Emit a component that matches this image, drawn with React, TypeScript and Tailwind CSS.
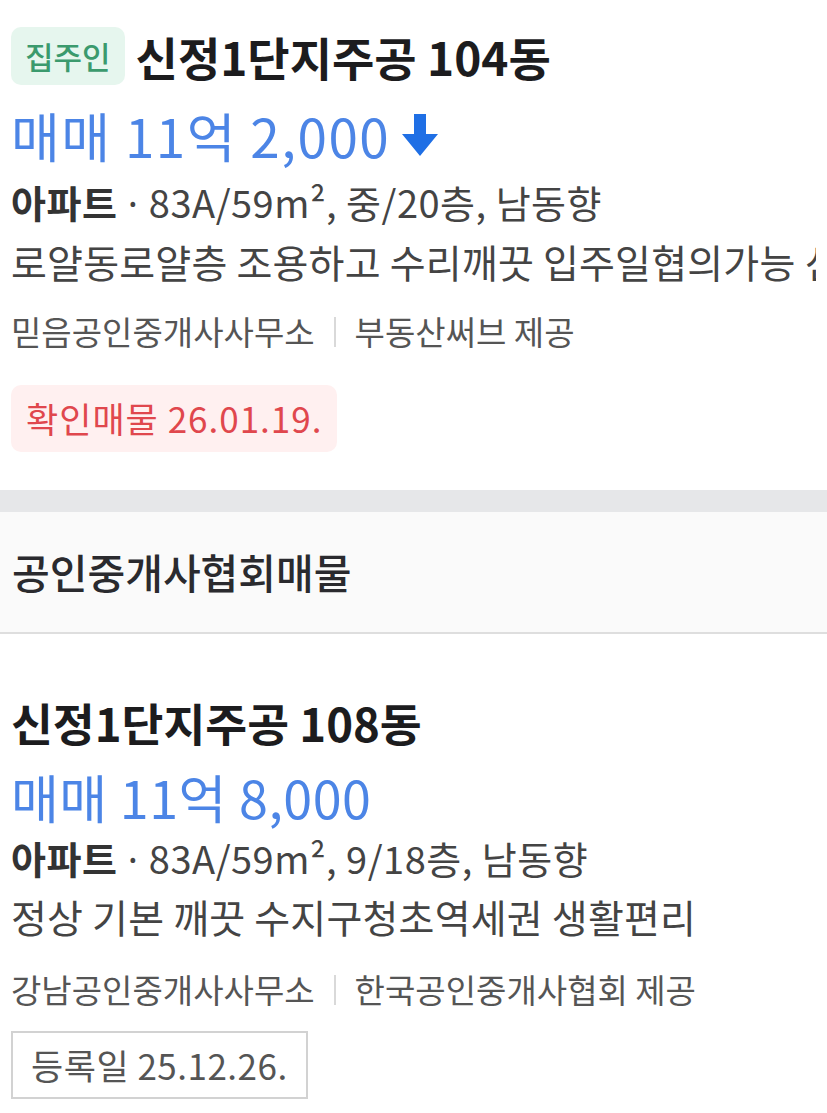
import React from "react";

const FONT = { fontFamily: '"Noto Sans CJK KR", "Noto Sans", sans-serif' };

function DownArrow() {
  return (
    <svg width="40" height="46" viewBox="0 0 40 46" className="ml-[10px] shrink-0">
      <path d="M14 2 H26 V22 H38 L20 44 L2 22 H14 Z" fill="#1f6fe5" />
    </svg>
  );
}

function Sep() {
  return <span className="mx-[19px] inline-block h-[30px] w-[2px] bg-[#d9d9d9]" />;
}

function Dot() {
  return <span className="font-['Noto_Sans',sans-serif]"> · </span>;
}

export default function App() {
  return (
    <div className="w-[827px] bg-white overflow-hidden" style={FONT}>
      {/* Card 1 */}
      <div className="px-[11px] pt-[27px] pb-[38px]">
        <div className="flex h-[58px] items-center">
          <span className="flex h-[58px] items-center rounded-[10px] bg-[#e6f6ee] px-[14px] text-[31px] font-medium text-[#3b9a6d]">
            집주인
          </span>
          <span className="ml-[11px] text-[46px] font-semibold leading-[58px] text-[#1c1c1e] whitespace-nowrap">
            신정1단지주공 104동
          </span>
        </div>
        <div className="mt-[20px] flex h-[60px] items-center">
          <span className="text-[53px] tracking-[1.5px] leading-[60px] text-[#4c85e6] whitespace-nowrap">매매 11억 2,000</span>
          <DownArrow />
        </div>
        <div className="mt-[12px] h-[50px] text-[38px] tracking-[0.5px] leading-[50px] text-[#444] whitespace-nowrap">
          <span className="font-bold text-[#333]">아파트</span>
          <Dot />
          83A/59m², 중/20층, 남동향
        </div>
        <div className="mt-[9px] h-[50px] overflow-hidden text-[39px] tracking-[0.2px] leading-[50px] text-[#444] whitespace-nowrap">
          로얄동로얄층 조용하고 수리깨끗 입주일협의가능 신
        </div>
        <div className="mt-[24px] flex h-[44px] items-center text-[33px] text-[#555] whitespace-nowrap">
          <span>믿음공인중개사사무소</span>
          <Sep />
          <span>부동산써브 제공</span>
        </div>
        <div className="mt-[31px] flex">
          <span className="flex h-[67px] items-center rounded-[10px] bg-[#fff0f0] px-[15px] text-[35px] tracking-[1px] text-[#e0474d] whitespace-nowrap">
            확인매물 26.01.19.
          </span>
        </div>
      </div>

      {/* Divider band */}
      <div className="h-[22px] bg-[#e6e7e9]" />

      {/* Section header */}
      <div className="flex h-[122px] items-center border-b-2 border-[#dedede] bg-[#fafafa] px-[12px]">
        <span className="text-[41px] font-medium text-[#2a2a2e]">공인중개사협회매물</span>
      </div>

      {/* Card 2 */}
      <div className="px-[11px] pt-[59px] pb-[14px]">
        <div className="h-[58px] text-[45.5px] font-semibold leading-[58px] text-[#1c1c1e] whitespace-nowrap">
          신정1단지주공 108동
        </div>
        <div className="mt-[16px] h-[60px] text-[52px] tracking-[0.5px] leading-[60px] text-[#4c85e6] whitespace-nowrap">
          매매 11억 8,000
        </div>
        <div className="mt-[6px] h-[50px] text-[38px] tracking-[0.5px] leading-[50px] text-[#444] whitespace-nowrap">
          <span className="font-bold text-[#333]">아파트</span>
          <Dot />
          83A/59m², 9/18층, 남동향
        </div>
        <div className="mt-[8px] h-[50px] text-[39px] tracking-[0.2px] leading-[50px] text-[#444] whitespace-nowrap">
          정상 기본 깨끗 수지구청초역세권 생활편리
        </div>
        <div className="mt-[27px] flex h-[44px] items-center text-[33px] text-[#555] whitespace-nowrap">
          <span>강남공인중개사사무소</span>
          <Sep />
          <span>한국공인중개사협회 제공</span>
        </div>
        <div className="mt-[19px] flex">
          <span className="flex h-[68px] items-center border-2 border-[#d2d2d2] bg-white px-[18px] text-[35px] tracking-[0.5px] text-[#555] whitespace-nowrap">
            등록일 25.12.26.
          </span>
        </div>
      </div>
    </div>
  );
}
